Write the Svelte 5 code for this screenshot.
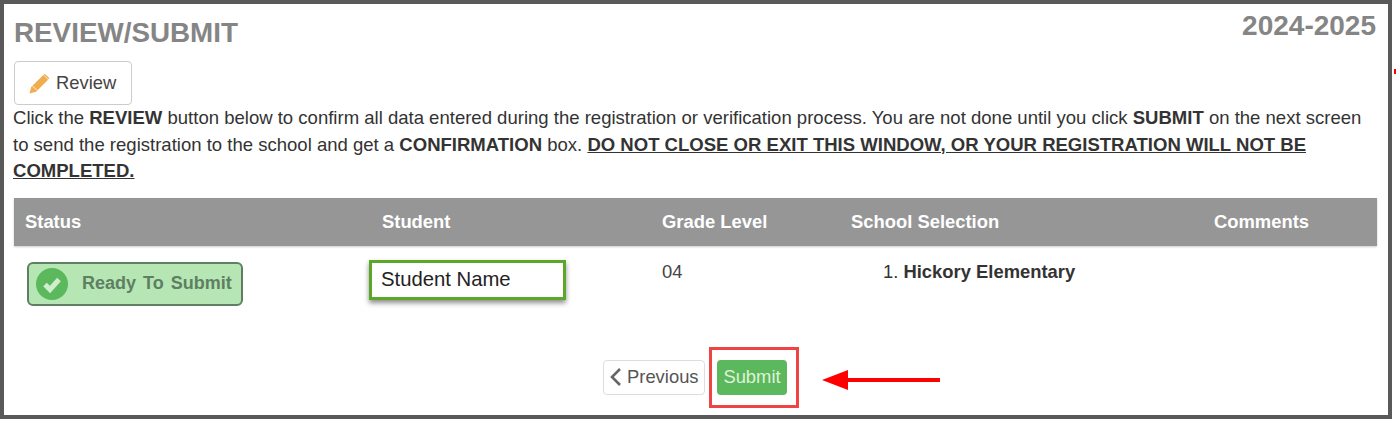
<script lang="ts">
  const columns = [
    { label: 'Status', width: 357 },
    { label: 'Student', width: 280 },
    { label: 'Grade Level', width: 189 },
    { label: 'School Selection', width: 363 },
    { label: 'Comments', width: 172 }
  ];
</script>

<div class="frame">
  <header class="top">
    <h1>REVIEW/SUBMIT</h1>
    <span class="year">2024-2025</span>
  </header>

  <button class="btn review" type="button">
    <svg width="21" height="21" viewBox="0 0 20 20" aria-hidden="true">
      <path d="M0.5 19.5l1.6-6.2L13.6 1.8l4.6 4.6L6.7 17.9z" fill="#f0ad4e" />
      <path d="M15 0.6l4.4 4.4-1 1L14 1.6z" fill="#f0ad4e" />
      <path d="M3.4 12.4l4.2 4.2" stroke="#fff" stroke-width="0.8" />
    </svg>
    Review
  </button>

  <p class="intro">
    Click the <b>REVIEW</b> button below to confirm all data entered during the registration or verification process. You are not done until you click <b>SUBMIT</b> on the next screen to send the registration to the school and get a <b>CONFIRMATION</b> box. <b class="warn">DO NOT CLOSE OR EXIT THIS WINDOW, OR YOUR REGISTRATION WILL NOT BE COMPLETED.</b>
  </p>

  <div class="table-head">
    {#each columns as col}
      <span style="width: {col.width}px">{col.label}</span>
    {/each}
  </div>

  <div class="table-row">
    <div class="cell status">
      <div class="badge">
        <svg width="34" height="34" viewBox="0 0 34 34" aria-hidden="true">
          <circle cx="17" cy="17" r="16" fill="#5cb85c" />
          <path d="M10 17.5l5 5 9-10" fill="none" stroke="#cfeecd" stroke-width="5" />
        </svg>
        <span>Ready To Submit</span>
      </div>
    </div>
    <div class="cell student">
      <div class="name">Student Name</div>
    </div>
    <div class="cell grade">04</div>
    <div class="cell school">1. <b>Hickory Elementary</b></div>
  </div>

  <div class="actions">
    <button class="btn previous" type="button">
      <svg width="13" height="20" viewBox="0 0 13 20" aria-hidden="true">
        <path d="M11 2L3 10l8 8" fill="none" stroke="#666" stroke-width="2.6" />
      </svg>
      Previous
    </button>
    <div class="highlight">
      <button class="btn submit" type="button">Submit</button>
    </div>
    <svg class="arrow" width="120" height="22" viewBox="0 0 120 22" aria-hidden="true">
      <path d="M0 11L26 1v8h92v4H26v8z" fill="#f00" />
    </svg>
  </div>
</div>

<span class="tick"></span>

<style>
  :global(body) {
    margin: 0;
    background: #fff;
  }

  .frame {
    box-sizing: border-box;
    width: 1392px;
    height: 419px;
    border: 4px solid #595959;
    padding: 0 11px 0 10px;
    font-family: "Liberation Sans", Arial, sans-serif;
    font-size: 18.4px;
    color: #333;
  }

  .top {
    display: flex;
    justify-content: space-between;
    height: 57px;
  }

  h1 {
    margin: 14px 0 0;
    font-size: 27.8px;
    line-height: 30px;
    color: #858585;
  }

  .year {
    margin: 7px 1px 0 0;
    font-size: 28px;
    line-height: 30px;
    font-weight: 700;
    color: #858585;
  }

  .btn {
    font-family: inherit;
    border-radius: 4px;
    cursor: pointer;
  }

  .review {
    display: flex;
    align-items: center;
    gap: 6px;
    width: 118px;
    height: 44px;
    padding: 0 0 0 14px;
    background: #fff;
    border: 1px solid #ccc;
    font-size: 18.4px;
    color: #444;
  }

  .intro {
    margin: 0 0 0 -1px;
    font-size: 18.55px;
    line-height: 26.5px;
  }

  .warn {
    text-decoration: underline;
  }

  .table-head {
    display: flex;
    align-items: center;
    margin-top: 13px;
    height: 48px;
    background: #969696;
    box-shadow: 0 1px 2px #ccc;
  }

  .table-head span {
    box-sizing: border-box;
    padding-left: 11px;
    font-weight: 700;
    color: #fff;
  }

  .table-row {
    display: flex;
    height: 101px;
  }

  .cell {
    box-sizing: border-box;
    flex: none;
  }

  .status {
    width: 355px;
    padding: 16px 0 0 13px;
  }

  .badge {
    display: flex;
    align-items: center;
    box-sizing: border-box;
    width: 216px;
    height: 44px;
    padding-left: 6px;
    gap: 13px;
    background: #b5e6b3;
    border: 2px solid #5f7f63;
    border-radius: 6px;
    font-size: 18px;
    font-weight: 700;
    word-spacing: 2px;
    color: #5f7f63;
  }

  .student {
    width: 293px;
    padding-top: 14px;
  }

  .name {
    box-sizing: border-box;
    width: 197px;
    height: 40px;
    padding-left: 9px;
    border: 3px solid #5ca72a;
    box-shadow: 0 3px 5px rgba(0, 0, 0, 0.45);
    font-size: 20.3px;
    line-height: 33px;
    color: #222;
  }

  .grade {
    width: 221px;
    padding-top: 15px;
    color: #444;
  }

  .school {
    padding-top: 15px;
    color: #333;
  }

  .actions {
    display: flex;
    align-items: flex-start;
    margin-left: 589px;
  }

  .previous {
    display: flex;
    align-items: center;
    gap: 5px;
    box-sizing: border-box;
    width: 102px;
    height: 35px;
    margin-top: 13px;
    padding: 0 0 0 5px;
    background: #fff;
    border: 1px solid #ddd;
    font-size: 18.4px;
    color: #555;
  }

  .highlight {
    box-sizing: border-box;
    width: 90px;
    height: 61px;
    margin-left: 4px;
    padding: 10px 0 0 5px;
    border: 3px solid #ee4444;
  }

  .submit {
    display: block;
    width: 70px;
    height: 35px;
    padding: 0;
    background: #5cb85c;
    border: none;
    font-size: 18.4px;
    color: #dff3da;
  }

  .arrow {
    margin: 22px 0 0 23px;
  }

  .tick {
    position: absolute;
    left: 1394px;
    top: 69px;
    width: 2px;
    height: 5px;
    background: #f00;
  }
</style>
